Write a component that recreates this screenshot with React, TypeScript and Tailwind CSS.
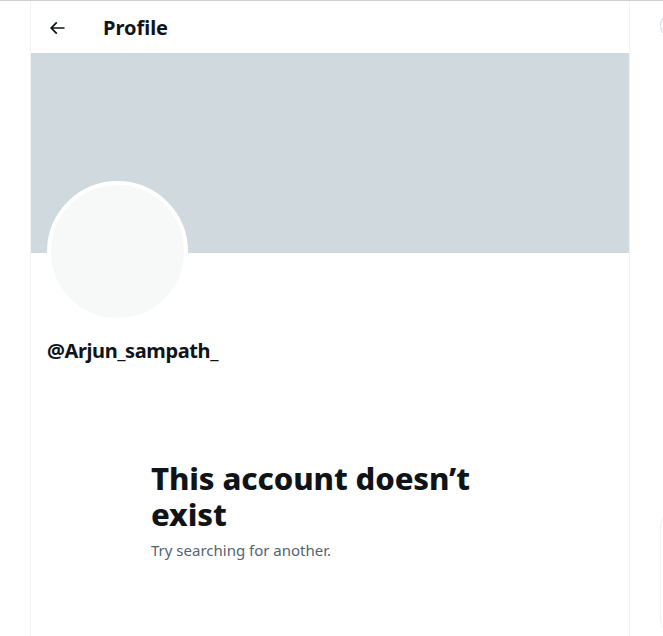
import React from "react";

const App = () => {
  return (
    <div
      className="h-[636px] w-[663px] overflow-hidden bg-white border-t border-[#cfcfcf]"
      style={{ fontFamily: '"Noto Sans", "Open Sans", sans-serif' }}
    >
      <div className="flex h-full">
        <div className="w-[30px] shrink-0" />
        <main className="w-[600px] shrink-0 border-x border-[#eff3f4] h-full">
          <div className="h-[52px] flex items-center px-4 pt-[2px]">
            <div className="w-[20px] h-[20px] flex items-center justify-center">
              <svg viewBox="0 0 24 24" className="w-[20px] h-[20px] text-[#0f1419]" fill="currentColor">
                <path d="M7.414 13l5.043 5.04-1.414 1.42L3.586 12l7.457-7.46 1.414 1.42L7.414 11H21v2H7.414z" />
              </svg>
            </div>
            <h2 className="ml-[36px] text-[20px] font-bold text-[#0f1419] leading-6">Profile</h2>
          </div>
          <div className="h-[200px] bg-[#cfd9de]" />
          <div className="px-4">
            <div className="-mt-[72px] w-[141px] h-[141px] rounded-full border-4 border-white bg-[#f7f9f9]" />
            <div className="mt-[17px] text-[20px] font-bold text-[#0f1419] leading-6 tracking-[-0.4px]">@Arjun_sampath_</div>
          </div>
          <div className="mt-[97px] pl-[120px] pr-[120px]">
            <h1 className="text-[31px] font-extrabold leading-[36px] text-[#0f1419] tracking-[-0.1px]">
              This account doesn’t exist
            </h1>
            <p className="mt-[8px] text-[15px] text-[#536471] leading-5">Try searching for another.</p>
          </div>
        </main>
        <aside className="pl-[30px] flex flex-col">
          <div className="mt-[11px] w-[300px] h-[42px] rounded-full border border-[#cfd9de] bg-white" />
          <div className="mt-[471px] w-[300px] h-[200px] rounded-2xl border border-[#eff3f4]" />
        </aside>
      </div>
    </div>
  );
};

export default App;
